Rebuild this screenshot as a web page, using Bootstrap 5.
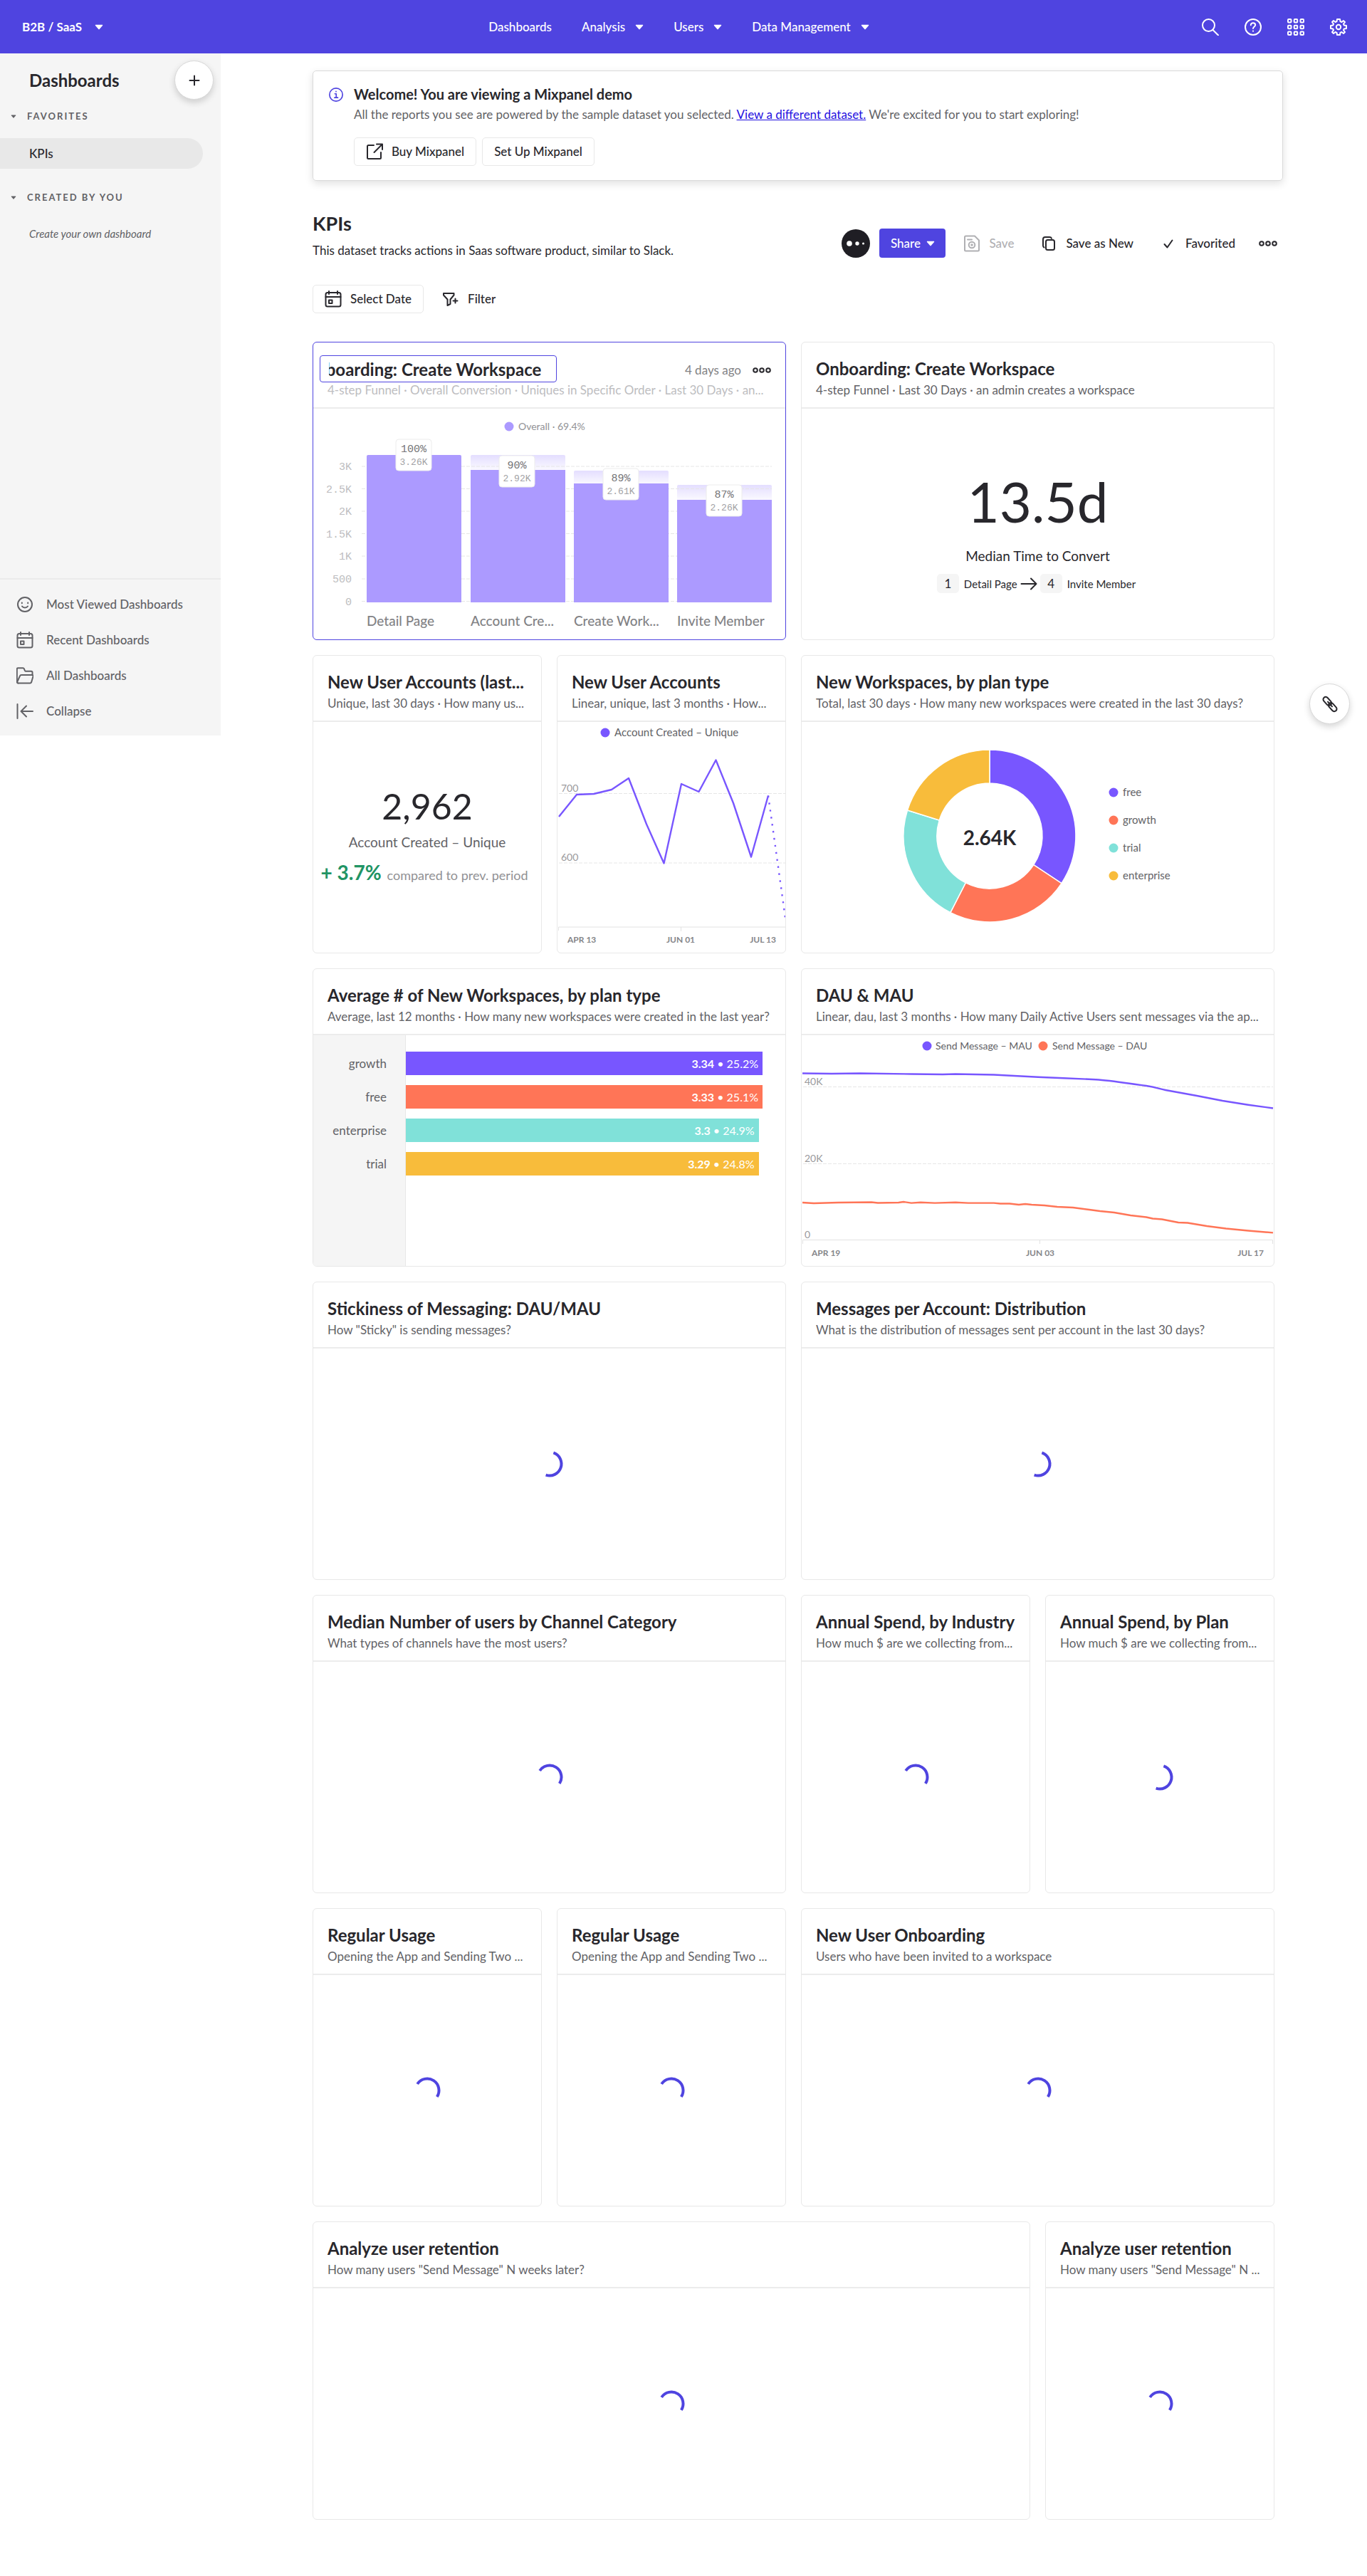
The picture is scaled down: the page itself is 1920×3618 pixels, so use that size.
<!DOCTYPE html>
<html lang="en">
<head>
<meta charset="utf-8">
<meta name="viewport" content="width=device-width, initial-scale=1">
<title>KPIs – Dashboards</title>
<link href="https://cdn.jsdelivr.net/npm/bootstrap@5.3.0/dist/css/bootstrap.min.css" rel="stylesheet">
<style>
:root{--brand:#4f44e0;--ink:#28272c;--muted-ink:#626266;--line:#e8e8e8}
body{font-family:Lato,"Liberation Sans",sans-serif;font-size:17px;line-height:24px;color:var(--ink);background:#fff}
svg{display:block;flex:none}
.ico{width:24px;height:24px;fill:none;stroke:currentColor;stroke-width:2;stroke-linecap:round;stroke-linejoin:round}
.dots{width:26px;height:10px}
.caret{width:12px;height:8px;fill:currentColor}
.plain{border:0;background:none;padding:0;color:inherit;font-weight:500}
/* top bar */
.topbar{background:var(--brand);color:#fff;height:75px;padding:0 28px 0 31px}
.topbar a{color:#fff;text-decoration:none;font-weight:500}
.side-col{flex:1 1 0}
.main-nav{gap:42px;padding-right:16px}
.with-caret{display:flex;align-items:center;gap:14px}
.tools{gap:36px}
/* sidebar */
.sidebar{width:310px;height:958px;background:#f5f5f5;color:var(--muted-ink);flex:none}
.side-head{padding:10px 10px 0 41px}
.side-head h2{font-size:24px;line-height:28px;font-weight:700;color:var(--ink);margin:0}
.round-btn{width:55px;height:55px;border-radius:50%;border:1px solid #d9d9d9;background:#fff;color:var(--ink);box-shadow:0 4px 10px rgba(0,0,0,.16);display:flex;align-items:center;justify-content:center;padding:0}
.side-label{font-size:13px;line-height:20px;font-weight:700;letter-spacing:2px;padding-left:15px;gap:15px;display:flex;align-items:center}
.side-head+.side-label{margin-top:13px}
.side-item+.side-label{margin-top:30px}
.side-label svg{width:8px;height:5px}
.side-item{height:43px;line-height:43px;padding-left:41px;margin:21px 25px 0 0;border-radius:0 22px 22px 0;background:#e8e8e8;color:var(--ink);font-weight:500;text-decoration:none;display:block}
.side-empty{font-size:15px;line-height:20px;font-style:italic;padding-left:41px;margin-top:31px}
.side-foot{border-top:2px solid #ebebeb;padding:10px 0 9px 23px}
.side-foot a{display:flex;align-items:center;height:50px;gap:18px;color:var(--muted-ink);text-decoration:none;font-weight:500}
/* content */
.content{padding:24px 118px 80px 129px;min-width:0}
.notice{border:1px solid #dadada;border-radius:5px;box-shadow:0 4px 12px rgba(0,0,0,.12);padding:19px 22px 20px;gap:15px}
.notice h2{font-size:20px;line-height:26px;font-weight:700;margin:0 0 4px}
.notice p{color:var(--muted-ink);margin:0 0 20px}
.notice p a{color:#1f0fe0}
.info-ico{width:20px;height:20px;margin-top:4px;color:var(--brand)}
.line-btn{height:40px;border:1px solid var(--line);border-radius:5px;background:#fff;color:var(--ink);font-weight:500;padding:0 16px;display:flex;align-items:center;gap:12px}
.flat-btn{height:40px;border:0;background:none;color:var(--ink);font-weight:500;padding:0 12px;display:flex;align-items:center;gap:12px}
.flat-btn:disabled{color:#b0b0b3}
.share-btn{height:41px;width:93px;border:0;border-radius:4px;background:var(--brand);color:#fff;font-weight:500;display:flex;align-items:center;justify-content:center;gap:8px}
.page-head{margin-top:43px}
.page-head h1{font-size:27px;line-height:34px;font-weight:700;margin:0 0 9px}
.actions{gap:13px;padding-bottom:2px}
.more-btn{padding:0 8px}
.filters{margin:36px 0 40px;gap:14px}
/* tiles */
.tiles{padding-right:12px}
.tiles-row{--bs-gutter-x:21px;--bs-gutter-y:21px}
.tile{height:419px;border:1px solid var(--line);border-radius:6px;background:#fff;display:flex;flex-direction:column;overflow:hidden}
.tile-on{border-color:var(--brand)}
.tile-head{height:93px;border-bottom:2px solid #ececec;padding:23px 20px 0;flex:none;white-space:nowrap}
.tile-head h2{font-size:24px;line-height:28px;font-weight:700;margin:0 0 4px}
.tile-head p{margin:0;color:var(--muted-ink)}
.tile-on .tile-head p{color:#bdbdbf}
.tile-name{font-size:24px;font-weight:700;color:var(--ink);width:333px;height:38px;margin:-5px 0 -1px -11px;padding:0 21px 0 12px;border:1px solid var(--brand);border-radius:4px;outline:0}
.tile-age{gap:16px;color:#828285}
.tile-age button{color:var(--ink)}
.tile-body{flex:1;min-height:0}
.tile-body>svg{width:100%;height:auto}
.loading{display:flex;align-items:center;justify-content:center}
.loading>svg{width:40px;height:40px;fill:none;stroke:var(--brand);stroke-width:4}
.lower{padding-top:19px}
.big-num{font-size:78px;line-height:92px;margin-bottom:18px}
.mid-num{font-size:50px;line-height:60px;margin-bottom:8px}
.cap-text{font-size:19px;line-height:26px;margin-bottom:12px}
.soft{color:var(--muted-ink)}
.step-no{background:#f5f5f5;border-radius:5px;width:31px;height:27px;display:inline-flex;align-items:center;justify-content:center}
.step-name{font-size:15px;margin:0 4px 0 7px}
.delta{font-size:28px;line-height:34px;font-weight:700;color:#219464}
.delta-note{font-size:18px;color:#919194}
/* bar tile */
.bar-names{width:130px;background:#f5f5f5;border-right:1px solid var(--line);padding:23px 26px 0 0;text-align:right;flex:none;color:var(--muted-ink)}
.bar-names div,.bar-fill{height:33px;line-height:33px;margin-bottom:14px}
.bar-area{flex:1;padding-top:23px}
.bar-fill{color:#fff;text-align:right;padding-right:6px;font-size:16px}
/* svg text */
.t15{font-size:15px}.t14{font-size:14px}.t19{font-size:19px;font-weight:500}
.ax{font-size:12px;font-weight:700;fill:#86868a}
.yl{font-size:14px;fill:#9a9a9d}
.lg{font-size:15px;fill:var(--muted-ink)}
.lg-s{font-size:14px;fill:var(--muted-ink)}
.mono{font-family:"Liberation Mono",monospace}
.dash{stroke:#e6e6e6;stroke-width:1;stroke-dasharray:5 2}
.axis{stroke:#e2e2e2;fill:none}
.line{fill:none;stroke-width:2.4;stroke-linejoin:round}
.float-btn{position:absolute;right:24px;top:960px;width:57px;height:57px}
</style>
</head>
<body class="position-relative">
<svg width="0" height="0" class="position-absolute" aria-hidden="true">
  <symbol id="caret" viewBox="0 0 12 8"><path d="M1.5.8h9c.6 0 .9.6.5 1.1L6.6 7.1a.8.8 0 0 1-1.200 0L1 1.900C.6 1.400.9.8 1.500.8z"/></symbol>
  <symbol id="cal" viewBox="0 0 24 24"><rect x="1.500" y="3" width="21" height="19.500" rx="2.500"/><path d="M1.500 9h21M6 1v4M18 1v4"/><rect x="6" y="13.500" width="4.500" height="4.500"/></symbol>
  <symbol id="more" viewBox="0 0 26 10"><circle cx="4" cy="5" r="2.800"/><circle cx="13" cy="5" r="2.800"/><circle cx="22" cy="5" r="2.800"/></symbol>
  <symbol id="arcA" viewBox="0 0 40 40"><path d="M20 3.500a16.500 16.500 0 0 1 0 33" transform="rotate(19 20 20)"/></symbol>
  <symbol id="arcB" viewBox="0 0 40 40"><path d="M20 3.500a16.500 16.500 0 0 1 0 33" transform="rotate(-57 20 20)"/></symbol>
</svg>

<header class="topbar d-flex align-items-center">
  <div class="side-col"><button class="plain with-caret fw-bold" type="button">B2B / SaaS <svg class="caret ms-1"><use href="#caret"/></svg></button></div>
  <nav class="main-nav d-flex">
    <a href="#">Dashboards</a>
    <button class="plain with-caret" type="button">Analysis <svg class="caret"><use href="#caret"/></svg></button>
    <button class="plain with-caret" type="button">Users <svg class="caret"><use href="#caret"/></svg></button>
    <button class="plain with-caret" type="button">Data Management <svg class="caret"><use href="#caret"/></svg></button>
  </nav>
  <div class="side-col tools d-flex justify-content-end">
    <button class="plain" type="button" aria-label="Search"><svg class="ico" viewBox="0 0 24 24"><circle cx="9.500" cy="9.500" r="8.500"/><path d="M15.500 16l8 8"/></svg></button>
    <button class="plain" type="button" aria-label="Help"><svg class="ico" viewBox="0 0 24 24"><circle cx="12" cy="12" r="11"/><path d="M8.800 9.200c0-1.900 1.400-3 3.200-3s3.200 1.200 3.200 2.900c0 2.300-3.200 2.500-3.200 5"/><path d="M12 17.500v.2"/></svg></button>
    <button class="plain" type="button" aria-label="Apps"><svg class="ico" viewBox="0 0 24 24"><g id="dotrow"><rect x="1" y="1" width="4.500" height="4.500" rx="1"/><rect x="9.700" y="1" width="4.500" height="4.500" rx="1"/><rect x="18.500" y="1" width="4.500" height="4.500" rx="1"/></g><use href="#dotrow" y="8.700"/><use href="#dotrow" y="17.500"/></svg></button>
    <button class="plain" type="button" aria-label="Settings"><svg class="ico" viewBox="0 0 24 24"><path d="M10 1h4l.5 3.200 1.900.8L19 3.100 21 5l-2 2.700.8 1.900L23 10v4l-3.200.5-.8 1.900 2 2.600-2 2-2.600-2-1.900.8L14 23h-4l-.5-3.200-1.900-.8L5 21l-2-2 2-2.600-.8-1.900L1 14v-4l3.200-.5L5 7.600 3 5l2-2 2.600 2 1.900-.8z"/><circle cx="12" cy="12" r="3.200"/></svg></button>
  </div>
</header>

<div class="d-flex align-items-start">
  <aside class="sidebar d-flex flex-column">
    <div class="side-head d-flex align-items-center justify-content-between">
      <h2>Dashboards</h2>
      <button class="round-btn" type="button" aria-label="New dashboard"><svg class="ico" viewBox="0 0 24 24"><path d="M12 5.500v13M5.500 12h13"/></svg></button>
    </div>
    <div class="side-label"><svg class="caret"><use href="#caret"/></svg>FAVORITES</div>
    <a class="side-item" href="#">KPIs</a>
    <div class="side-label"><svg class="caret"><use href="#caret"/></svg>CREATED BY YOU</div>
    <div class="side-empty">Create your own dashboard</div>
    <div class="side-foot mt-auto">
      <a href="#"><svg class="ico" viewBox="0 0 24 24"><circle cx="12" cy="12" r="10"/><path d="M8 14.500c1.800 2.600 6.200 2.600 8 0M7.800 9.500v.8M16.200 9.500v.8"/></svg>Most Viewed Dashboards</a>
      <a href="#"><svg class="ico"><use href="#cal"/></svg>Recent Dashboards</a>
      <a href="#"><svg class="ico" viewBox="0 0 24 24"><path d="M2.500 22.500c-1 0-1.700-.7-1.700-1.700V2.800c0-.9.6-1.500 1.500-1.500h7c.8 0 1.300.4 1.600 1.100l1 2.600c.2.500.6.700 1 .7h8c1 0 1.600.6 1.600 1.500V11"/><path d="M2.300 22.500h17c.9 0 1.500-.5 1.800-1.300l2.300-8c.3-1.200-.3-2.200-1.500-2.200H7c-1 0-1.700.5-2 1.400L1.500 20"/></svg>All Dashboards</a>
      <a href="#"><svg class="ico" viewBox="0 0 24 24"><path d="M1.500 2v20M23 12H7M14 4.500L6.500 12l7.500 7.500"/></svg>Collapse</a>
    </div>
  </aside>

  <main class="content flex-grow-1">
    <section class="notice d-flex">
      <svg class="ico info-ico" viewBox="0 0 24 24"><circle cx="12" cy="12" r="11"/><path d="M10 10.500h2.300v6.500M9.500 17h5.500M12 6.500v.3"/></svg>
      <div>
        <h2>Welcome! You are viewing a Mixpanel demo</h2>
        <p>All the reports you see are powered by the sample dataset you selected. <a href="#">View a different dataset.</a> We're excited for you to start exploring!</p>
        <div class="d-flex gap-2">
          <button class="line-btn" type="button"><svg class="ico" viewBox="0 0 24 24"><path d="M11 3H3.500C2.500 3 2 3.500 2 4.500v16c0 1 .5 1.500 1.500 1.500h16c1 0 1.500-.5 1.500-1.500V13M15 1.500h8V9M22.500 2L11.500 13"/></svg>Buy Mixpanel</button>
          <button class="line-btn" type="button">Set Up Mixpanel</button>
        </div>
      </div>
    </section>

    <div class="page-head d-flex justify-content-between align-items-end">
      <div><h1>KPIs</h1><p class="m-0">This dataset tracks actions in Saas software product, similar to Slack.</p></div>
      <div class="actions d-flex align-items-center">
        <svg width="40" height="40" viewBox="0 0 40 40" role="img" aria-label="Owner"><circle cx="20" cy="20" r="20" fill="#1f1e24"/><g fill="#fff"><circle cx="11" cy="20" r="3.800"/><circle cx="22" cy="20" r="2.700"/><circle cx="30.500" cy="20" r="1.500"/></g></svg>
        <button class="share-btn" type="button">Share <svg class="caret"><use href="#caret"/></svg></button>
        <button class="flat-btn" type="button" disabled><svg class="ico" viewBox="0 0 24 24"><path d="M3.500 1.500H16l6 6v13.500c0 1-.6 1.500-1.500 1.500h-17C2.600 22.500 2 22 2 21V3c0-.9.6-1.500 1.500-1.500zM6 6.500h6"/><circle cx="12" cy="14" r="4.300"/><circle cx="12" cy="14" r=".8"/></svg>Save</button>
        <button class="flat-btn" type="button"><svg class="ico" viewBox="0 0 24 24"><rect x="8" y="7" width="12" height="14" rx="2.500"/><path d="M5.500 17.500C4.500 17 4 16.300 4 15V6c0-1.700 1-3 3-3h6c1.500 0 2.500.6 3 1.800"/></svg>Save as New</button>
        <button class="flat-btn" type="button"><svg class="ico" viewBox="0 0 24 24"><path d="M6.500 13l4 4.500 7-10"/></svg>Favorited</button>
        <button class="flat-btn more-btn" type="button" aria-label="More"><svg class="ico dots"><use href="#more"/></svg></button>
      </div>
    </div>

    <div class="filters d-flex">
      <button class="line-btn" type="button"><svg class="ico"><use href="#cal"/></svg>Select Date</button>
      <button class="flat-btn" type="button"><svg class="ico" viewBox="0 0 24 24"><path d="M2 4h14.500v2.500l-5 6V19l-4 2v-8.500L2 6.500zM18.500 11.500v6M15.500 14.500h6"/></svg>Filter</button>
    </div>

    <div class="tiles">
    <div class="row tiles-row">
      <div class="col-6"><section class="tile tile-on">
        <div class="tile-head">
          <div class="d-flex align-items-center justify-content-between">
            <input class="tile-name" type="text" aria-label="Report name" value="Onboarding: Create Workspace">
            <div class="tile-age d-flex align-items-center">4 days ago <button class="plain" type="button" aria-label="Report options"><svg class="ico dots"><use href="#more"/></svg></button></div>
          </div>
          <p>4-step Funnel · Overall Conversion · Uniques in Specific Order · Last 30 Days · an...</p>
        </div>
        <div class="tile-body">
          <svg viewBox="0 0 663 323" role="img" aria-label="Funnel conversion">
            <defs><linearGradient id="drop" x1="0" y1="0" x2="0" y2="1"><stop offset="0" stop-color="#e4deff"/><stop offset="1" stop-color="#fbfaff"/></linearGradient></defs>
            <circle cx="275" cy="25" r="6.500" fill="#ac9aff"/><text x="288" y="30" class="t14" fill="#929296">Overall · 69.4%</text>
            <g fill="url(#drop)"><path d="M221 87V67q0-2 2-2h129q2 0 2 2v20z"/><path d="M366 107V89q0-2 2-2h129q2 0 2 2v18z"/><path d="M511 129v-20q0-2 2-2h129q2 0 2 2v20z"/></g>
            <g class="dash"><path d="M68 81h576M68 112.500h576M68 144h576M68 175.500h576M68 207h576M68 239h576M68 270.500h576"/></g>
            <g fill="#ac9aff"><path d="M75 272V67q0-2 2-2h129q2 0 2 2v205z"/><rect x="221" y="86" width="133" height="186"/><rect x="366" y="105" width="133" height="167"/><rect x="511" y="128" width="133" height="144"/></g>
            <g class="mono t15" fill="#bdbdc0" text-anchor="end"><text x="54" y="86">3K</text><text x="54" y="118">2.5K</text><text x="54" y="149">2K</text><text x="54" y="181">1.5K</text><text x="54" y="212">1K</text><text x="54" y="244">500</text><text x="54" y="276">0</text></g>
            <g fill="#fff" stroke="#ececec"><rect x="116" y="43" width="50" height="44" rx="4"/><rect x="261" y="66" width="50" height="44" rx="4"/><rect x="407" y="84" width="50" height="44" rx="4"/><rect x="552" y="107" width="50" height="44" rx="4"/></g>
            <g class="mono t15" fill="#757578" text-anchor="middle"><text x="141" y="61">100%</text><text x="286" y="84">90%</text><text x="432" y="102">89%</text><text x="577" y="125">87%</text></g>
            <g class="mono" font-size="13" fill="#a2a2a5" text-anchor="middle"><text x="141" y="79">3.26K</text><text x="286" y="102">2.92K</text><text x="432" y="120">2.61K</text><text x="577" y="143">2.26K</text></g>
            <g class="t19" fill="#828285"><text x="75" y="305">Detail Page</text><text x="221" y="305">Account Cre...</text><text x="366" y="305">Create Work...</text><text x="511" y="305">Invite Member</text></g>
          </svg>
        </div>
      </section></div>

      <div class="col-6"><section class="tile">
        <div class="tile-head"><h2>Onboarding: Create Workspace</h2><p>4-step Funnel · Last 30 Days · an admin creates a workspace</p></div>
        <div class="tile-body lower d-flex flex-column align-items-center justify-content-center">
          <div class="big-num">13.5d</div>
          <div class="cap-text">Median Time to Convert</div>
          <div class="d-flex align-items-center"><span class="step-no">1</span><span class="step-name">Detail Page</span><svg class="ico me-1" viewBox="0 0 24 24"><path d="M1.500 12h21M15 4.500l7.500 7.500-7.500 7.500"/></svg><span class="step-no">4</span><span class="step-name">Invite Member</span></div>
        </div>
      </section></div>

      <div class="col-3"><section class="tile">
        <div class="tile-head"><h2>New User Accounts (last...</h2><p>Unique, last 30 days · How many us...</p></div>
        <div class="tile-body d-flex flex-column align-items-center justify-content-center pb-2 text-nowrap">
          <div class="mid-num">2,962</div>
          <div class="cap-text soft">Account Created – Unique</div>
          <div class="d-flex align-items-baseline gap-2 pe-2"><span class="delta">+ 3.7%</span><span class="delta-note">compared to prev. period</span></div>
        </div>
      </section></div>

      <div class="col-3"><section class="tile">
        <div class="tile-head"><h2>New User Accounts</h2><p>Linear, unique, last 3 months · How...</p></div>
        <div class="tile-body">
          <svg viewBox="0 0 320 323" role="img" aria-label="New user accounts by week">
            <circle cx="67" cy="15" r="6.500" fill="#7856ff"/><text x="80" y="20" class="lg">Account Created – Unique</text>
            <path class="dash" d="M2 100.500h318M2 198h318"/>
            <g class="yl"><text x="5" y="98">700</text><text x="5" y="195">600</text></g>
            <path class="line" stroke="#7856ff" d="M2 133L27 102 51 101 76 95 100 79 125 143.500 149.500 198.500 174 87 198.500 98 222.500 53.500 247 114 272 189.500 296 103.500"/>
            <path class="line" stroke="#7856ff" stroke-dasharray="2.400 7.600" d="M296 103.500L320 275"/>
            <path class="axis" d="M1.500 293v-5H320M173.500 288v6"/>
            <g class="ax"><text x="14" y="310">APR 13</text><text x="173" y="310" text-anchor="middle">JUN 01</text><text x="307" y="310" text-anchor="end">JUL 13</text></g>
          </svg>
        </div>
      </section></div>

      <div class="col-6"><section class="tile">
        <div class="tile-head"><h2>New Workspaces, by plan type</h2><p>Total, last 30 days · How many new workspaces were created in the last 30 days?</p></div>
        <div class="tile-body">
          <svg viewBox="0 0 663 323" role="img" aria-label="New workspaces by plan type">
            <g stroke="#fff" stroke-width="1.500">
              <path fill="#7856ff" d="M264 39A121 121 0 0 1 365 226.600L325.800 200.700A74 74 0 0 0 264 86z"/>
              <path fill="#ff7557" d="M365 226.600A121 121 0 0 1 208.900 267.700L230.300 225.900A74 74 0 0 0 325.800 200.700z"/>
              <path fill="#80e1d9" d="M208.900 267.700A121 121 0 0 1 148.500 124L193.300 138A74 74 0 0 0 230.300 225.900z"/>
              <path fill="#f8bc3b" d="M148.500 124A121 121 0 0 1 264 39V86A74 74 0 0 0 193.300 138z"/>
            </g>
            <text x="264" y="173" text-anchor="middle" font-size="28" font-weight="700" fill="#28272c">2.64K</text>
            <circle cx="438" cy="99" r="6.500" fill="#7856ff"/><circle cx="438" cy="138" r="6.500" fill="#ff7557"/><circle cx="438" cy="177" r="6.500" fill="#80e1d9"/><circle cx="438" cy="216" r="6.500" fill="#f8bc3b"/>
            <g class="lg"><text x="451" y="104">free</text><text x="451" y="143">growth</text><text x="451" y="182">trial</text><text x="451" y="221">enterprise</text></g>
          </svg>
        </div>
      </section></div>

      <div class="col-6"><section class="tile">
        <div class="tile-head"><h2>Average # of New Workspaces, by plan type</h2><p>Average, last 12 months · How many new workspaces were created in the last year?</p></div>
        <div class="tile-body d-flex">
          <div class="bar-names"><div>growth</div><div>free</div><div>enterprise</div><div>trial</div></div>
          <div class="bar-area">
            <div class="bar-fill" style="width:94%;background:#7856ff"><b>3.34</b> • 25.2%</div>
            <div class="bar-fill" style="width:94%;background:#ff7557"><b>3.33</b> • 25.1%</div>
            <div class="bar-fill" style="width:93%;background:#80e1d9"><b>3.3</b> • 24.9%</div>
            <div class="bar-fill" style="width:93%;background:#f8bc3b"><b>3.29</b> • 24.8%</div>
          </div>
        </div>
      </section></div>

      <div class="col-6"><section class="tile">
        <div class="tile-head"><h2>DAU &amp; MAU</h2><p>Linear, dau, last 3 months · How many Daily Active Users sent messages via the ap...</p></div>
        <div class="tile-body">
          <svg viewBox="0 0 663 323" role="img" aria-label="Daily and monthly active users">
            <circle cx="176" cy="15" r="6.500" fill="#7856ff"/><text x="188" y="20" class="lg-s">Send Message – MAU</text>
            <circle cx="339" cy="15" r="6.500" fill="#ff7557"/><text x="352" y="20" class="lg-s">Send Message – DAU</text>
            <path class="dash" d="M2 72.500h660M2 180.500h660"/>
            <g class="yl"><text x="4" y="70">40K</text><text x="4" y="178">20K</text><text x="4" y="285">0</text></g>
            <path class="line" stroke="#7856ff" d="M1 53.500L42 54 82 53.500 154 54.500 198 55 216 54.500 270 55.500 332 58.800 368 60.300 413 62.200C436 63.500 460 68 484 71 498 73 504 76 511 77L555 85 591 92 627 97.700 662 102.500"/>
            <path class="line" stroke="#ff7557" d="M1 235L17 236 51 235 98 234.500 107 235.500 136 235 143 234 154 235.600 167 234.700 187 235.600 216 234.700 234 235.600 270 235.600 279 236.500 292 236.500 305 238 314 237 323 238 341 239 359 241 381 242 404 245 419 247 439 249 462 253 484 255.500 493 257.500 506 258.500 529 263 542 263.500 569 268 596 271.500 627 274.500 662 277.400"/>
            <path class="axis" d="M1.500 293v-5.500h660v5.500M334.500 288v5"/>
            <g class="ax"><text x="14" y="310">APR 19</text><text x="335" y="310" text-anchor="middle">JUN 03</text><text x="649" y="310" text-anchor="end">JUL 17</text></g>
          </svg>
        </div>
      </section></div>

      <div class="col-6"><section class="tile"><div class="tile-head"><h2>Stickiness of Messaging: DAU/MAU</h2><p>How "Sticky" is sending messages?</p></div><div class="tile-body loading"><svg><use href="#arcA"/></svg></div></section></div>
      <div class="col-6"><section class="tile"><div class="tile-head"><h2>Messages per Account: Distribution</h2><p>What is the distribution of messages sent per account in the last 30 days?</p></div><div class="tile-body loading"><svg><use href="#arcA"/></svg></div></section></div>

      <div class="col-6"><section class="tile"><div class="tile-head"><h2>Median Number of users by Channel Category</h2><p>What types of channels have the most users?</p></div><div class="tile-body loading"><svg><use href="#arcB"/></svg></div></section></div>
      <div class="col-3"><section class="tile"><div class="tile-head"><h2>Annual Spend, by Industry</h2><p>How much $ are we collecting from...</p></div><div class="tile-body loading"><svg><use href="#arcB"/></svg></div></section></div>
      <div class="col-3"><section class="tile"><div class="tile-head"><h2>Annual Spend, by Plan</h2><p>How much $ are we collecting from...</p></div><div class="tile-body loading"><svg><use href="#arcA"/></svg></div></section></div>

      <div class="col-3"><section class="tile"><div class="tile-head"><h2>Regular Usage</h2><p>Opening the App and Sending Two ...</p></div><div class="tile-body loading"><svg><use href="#arcB"/></svg></div></section></div>
      <div class="col-3"><section class="tile"><div class="tile-head"><h2>Regular Usage</h2><p>Opening the App and Sending Two ...</p></div><div class="tile-body loading"><svg><use href="#arcB"/></svg></div></section></div>
      <div class="col-6"><section class="tile"><div class="tile-head"><h2>New User Onboarding</h2><p>Users who have been invited to a workspace</p></div><div class="tile-body loading"><svg><use href="#arcB"/></svg></div></section></div>

      <div class="col-9"><section class="tile"><div class="tile-head"><h2>Analyze user retention</h2><p>How many users "Send Message" N weeks later?</p></div><div class="tile-body loading"><svg><use href="#arcB"/></svg></div></section></div>
      <div class="col-3"><section class="tile"><div class="tile-head"><h2>Analyze user retention</h2><p>How many users "Send Message" N ...</p></div><div class="tile-body loading"><svg><use href="#arcB"/></svg></div></section></div>
    </div>
    </div>
  </main>
</div>

<button class="round-btn float-btn" type="button" aria-label="Copy link"><svg class="ico" viewBox="0 0 24 24"><g transform="rotate(-42 12 12)"><rect x="8.500" y="-.5" width="7" height="14" rx="3.500"/><rect x="8.500" y="10.500" width="7" height="14" rx="3.500"/><path d="M12 7.500v9"/></g></svg></button>

<script src="https://cdn.jsdelivr.net/npm/bootstrap@5.3.0/dist/js/bootstrap.bundle.min.js"></script>
<script>
document.fonts.ready.then(function(){var f=document.querySelector('.tile-name');f.scrollLeft=f.scrollWidth;});
</script>
</body>
</html>
